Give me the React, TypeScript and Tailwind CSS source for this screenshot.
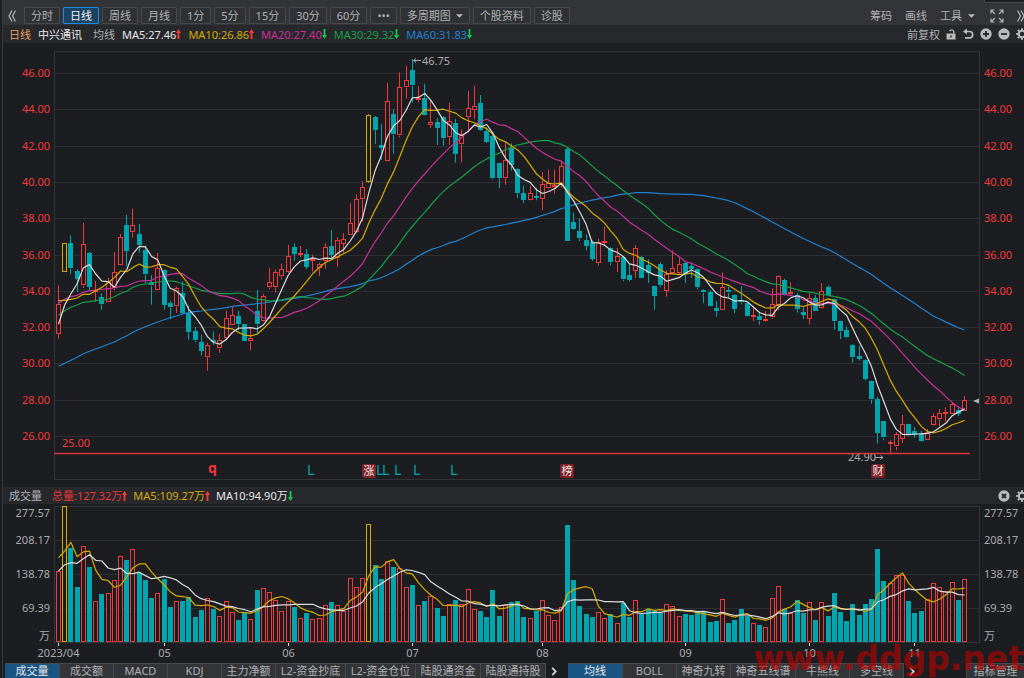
import React from "react";

type Kind = "up" | "down" | "limit";
interface Candle {
  x: number;
  high: number;
  top: number;
  bottom: number;
  low: number;
  kind: Kind;
}

const RED = "#f0393c";
const CYAN = "#00a5ad";
const YELLOW = "#d6ab00";
const WHITE = "#dcdcdc";
const MAGENTA = "#c9309b";
const GREEN = "#14a04a";
const BLUE = "#1e82d2";
const GRAY = "#a9abae";

const FIRST_X = 58.5;
const STEP = 6.206;
const VOLUME_BASE = 642;

/* Each segment lists candles as "kind high,top,bottom,low", in thirds of a unit below its origin. */
const candleSegments: { origin: number; rows: string }[] = [
  {
    origin: 180,
    rows: `R 316,372,463,476|Y 190,190,277,277|C 166,191,266,283|C 268,274,298,336|R 129,193,317,324|C 216,220,321,330|R 303,332,335,365|C 340,352,374,389|R 294,305,367,367|R 216,278,327,331|R 162,172,257,257|C 105,135,213,258|R 86,136,157,173|C 132,164,197,218|C 196,211,284,310|C 286,307,317,374|R 219,265,331,331|C 268,270,374,389|C 362,370,383,417|R 320,326,380,399|C 304,340,400,404|C 377,400,457,479|C 441,454,482,487|C 464,487,513,527|R 488,497,532,572|C 454,481,488,494|R 461,481,506,518|R 392,415,476,479|R 380,406,436,436|C 392,408,433,451|C 432,433,485,485|R 441,475,485,511|C 330,395,434,463|R 341,350,424,426|R 264,307,322,328|R 268,278,322,338`,
  },
  {
    origin: 50,
    rows: `R 641,658,680,688|R 585,619,667,670|C 580,591,611,632|R 588,609,611,622|C 597,612,650,657|R 614,629,632,664|R 638,643,656,678|R 580,592,634,657|C 540,588,616,627|R 562,570,624,650|R 550,567,581,608|R 460,520,556,556|R 433,448,547,549|R 394,412,448,515|Y 193,195,395,398|C 198,202,241,281|C 222,285,295,330|R 99,154,334,334|C 178,193,254,311|R 67,113,257,262|R 48,91,113,146|C 27,61,107,158|R 108,146,151,157|C 101,145,196,197|R 150,216,226,234|C 204,216,233,285|C 198,202,265,287|R 158,214,262,284|C 207,220,313,338|R 238,257,283,337|R 123,175,202,247|R 107,169,181,207|C 135,160,241,243|C 232,243,276,279|C 255,259,386,389|C 338,340,385,415`,
  },
  {
    origin: 120,
    rows: `R 66,121,176,194|C 70,84,136,152|C 145,147,220,234|C 197,219,240,250|R 198,219,239,241|C 203,228,231,241|R 156,193,238,271|R 149,190,206,208|R 149,195,200,221|R 122,139,195,203|C 83,87,364,364|C 277,306,326,329|C 295,335,356,363|C 343,360,377,391|C 361,367,417,422|R 356,367,430,437|R 320,363,369,378|C 382,386,428,436|R 384,409,428,456|C 408,413,479,484|C 432,465,480,484|R 376,384,452,473|C 408,411,473,473|C 418,436,459,489|C 497,499,528,570|C 427,434,497,502|R 451,462,512,530|R 391,445,460,462|R 412,433,460,463|C 424,430,463,489|C 429,439,447,474|C 446,448,502,508|C 508,511,518,550|C 511,517,558,558|C 543,565,574,590|R 457,502,571,571|C 500,511,518,534|C 523,525,566,580|C 498,541,548,553`,
  },
  {
    origin: 250,
    rows: `C 156,161,200,201|R 170,196,202,213|C 188,199,212,224|R 183,207,213,215|R 115,164,203,206|R 76,79,168,181|C 86,92,136,137|R 97,128,134,137|C 129,135,178,188|C 172,186,194,206|R 128,145,207,223|C 135,144,182,183|R 99,124,175,176|C 106,111,136,139|C 147,149,215,239|C 213,215,245,267|C 230,240,262,264|C 283,286,323,338|C 287,318,327,332|C 328,332,388,392|C 392,395,449,461|C 440,447,548,581|C 513,515,564,571|R 571,577,583,613|R 546,553,590,601|R 495,522,566,579|C 521,523,553,556|C 531,543,555,563|C 543,550,574,576|R 537,546,571,571|R 490,499,526,527|R 477,489,508,530|R 472,488,492,514|R 457,464,495,497|C 470,481,492,498|R 438,451,484,484`,
  },
];

const kinds: Record<string, Kind> = { R: "up", C: "down", Y: "limit" };

const candles: Candle[] = candleSegments
  .flatMap(({ origin, rows }) =>
    rows.split("|").map((row) => {
      const [k, values] = row.split(" ");
      const [high, top, bottom, low] = values.split(",").map((v) => origin + Number(v) / 3);
      return { high, top, bottom, low, kind: kinds[k] };
    }),
  )
  .map((c, i) => ({ ...c, x: FIRST_X + i * STEP }));

const volumeSegments: { origin: number; tops: number[] }[] = [
  {
    origin: 430,
    tops: [
      424, 229, 355, 472, 349, 411, 514, 493, 490, 451, 380, 390, 358, 429, 451, 504, 490, 448, 533, 514, 515, 502, 562,
      541, 505, 539, 559, 514, 547, 571, 550, 567, 480, 475, 487, 510, 545, 515, 533, 566, 550, 569, 564, 526, 517, 526,
    ],
  },
  {
    origin: 455,
    tops: [
      468, 370, 398, 370, 208, 332, 374, 319, 336, 340, 398, 390, 451, 440, 425, 459, 483, 449, 435, 449, 404, 462, 469,
      488, 405, 483, 451, 441, 438, 488, 489, 469, 436, 481, 496, 457, 211, 376, 454, 477, 488, 473, 489, 478, 505, 446,
      486, 436, 477, 462, 470, 474, 449, 454, 484,
    ],
  },
  {
    origin: 485,
    tops: [
      388, 390, 380, 380, 411, 409, 343, 414, 406, 374, 394, 415, 420, 426, 340, 303, 372, 385, 346, 385, 351, 406, 351,
      395, 326, 382, 409, 358, 390, 358, 343, 193, 289, 295, 270, 271, 350, 384, 380, 343, 295, 308, 320, 292, 345, 282,
    ],
  },
];
const volumeTops = volumeSegments.flatMap((s) => s.tops.map((t) => s.origin + t / 3));

const thirds = (origin: number, values: number[]) => values.map((v) => origin + v / 3);

/* Averages need sessions from before the visible range, so the first values are given. */
function average(series: number[], span: number, head: number[]): string {
  return series
    .map((_, i) => {
      const y = i < head.length ? head[i] : series.slice(i - span + 1, i + 1).reduce((a, b) => a + b, 0) / span;
      return `${(FIRST_X + i * STEP).toFixed(1)},${y.toFixed(1)}`;
    })
    .join(" ");
}

const closes = candles.map((c) => (c.kind === "down" ? c.bottom : c.top));

const priceLines = [
  {
    color: BLUE,
    points: average(
      closes,
      60,
      thirds(180, [
        559, 550, 541, 532, 521, 514, 507, 500, 493, 486, 476, 467, 457, 448, 440, 433, 426, 419, 413, 408, 402, 398,
        395, 393, 390, 388, 386, 383, 379, 377, 375, 373, 371, 369, 366, 363, 361, 358, 355, 352, 348, 344, 339, 334,
        329, 326, 323, 320, 316, 311, 303, 299, 293, 285, 276, 266, 253, 241, 228,
      ]),
    ),
  },
  {
    color: GREEN,
    points: average(
      closes,
      30,
      thirds(180, [
        406, 392, 382, 375, 367, 365, 362, 360, 358, 350, 340, 334, 322, 315, 312, 309, 306, 303, 303, 305, 311, 318,
        324, 331, 334, 338, 341, 341, 341,
      ]),
    ),
  },
  {
    color: MAGENTA,
    points: average(
      closes,
      20,
      thirds(180, [370, 357, 350, 346, 337, 332, 330, 328, 326, 324, 319, 318, 310, 303, 302, 301, 291, 288, 283]),
    ),
  },
  { color: YELLOW, points: average(closes, 10, thirds(180, [362, 361, 358, 354, 343, 343, 332, 322, 308])) },
  { color: WHITE, points: average(closes, 5, thirds(180, [433, 375, 341, 311])) },
];

const volumeLines = [
  { color: YELLOW, points: average(volumeTops, 5, thirds(430, [383, 363, 337, 380])) },
  { color: WHITE, points: average(volumeTops, 10, thirds(430, [423, 404, 398, 400, 386, 374, 391, 393, 414])) },
];

const priceLabels = Array.from({ length: 11 }, (_, i) => ({ text: `${46 - i * 2}.00`, y: Math.round(73 + i * 36.3) }));
const volumeLabels = [
  { text: "277.57", y: 517 },
  { text: "208.17", y: 544 },
  { text: "138.78", y: 578 },
  { text: "69.39", y: 612 },
  { text: "万", y: 640 },
];
const months = [
  { text: "2023/04", i: 0 },
  { text: "05", i: 17 },
  { text: "06", i: 37 },
  { text: "07", i: 57 },
  { text: "08", i: 78 },
  { text: "09", i: 101 },
  { text: "10", i: 121 },
  { text: "11", i: 138 },
];

const snap = (v: number) => Math.floor(v) + 0.5;

function CandleMark({ c }: { c: Candle }) {
  const x = snap(c.x);
  const color = c.kind === "down" ? CYAN : c.kind === "up" ? RED : YELLOW;
  const top = snap(c.top);
  const height = Math.max(1, Math.round(c.bottom - c.top) - 1);
  return (
    <g stroke={color} strokeWidth={1}>
      <path d={`M${x} ${c.high.toFixed(1)}V${c.top.toFixed(1)}M${x} ${c.bottom.toFixed(1)}V${c.low.toFixed(1)}`} />
      <rect x={x - 2} y={top} width={4} height={height} fill={c.kind === "down" ? CYAN : "#1c1d20"} />
    </g>
  );
}

function PriceChart() {
  return (
    <svg viewBox="3 43 1021 444" className="block w-full" role="img" aria-label="日线" fontSize={11}>
      {priceLabels.map((l) => (
        <g key={l.text}>
          <path d={`M54 ${l.y + 0.5}H980`} stroke="#2e2f33" />
          <text x={50} y={l.y + 4} textAnchor="end" fill={RED}>
            {l.text}
          </text>
          <text x={984} y={l.y + 4} fill={RED}>
            {l.text}
          </text>
        </g>
      ))}
      <rect x={54.5} y={51.5} width={925} height={428} fill="none" stroke="#333438" />
      {candles.map((c, i) => (
        <CandleMark key={i} c={c} />
      ))}
      {priceLines.map((l) => (
        <polyline key={l.color} points={l.points} fill="none" stroke={l.color} strokeWidth={1.2} strokeLinejoin="round" />
      ))}
      <text x={848} y={461} fill={GRAY}>
        24.90
      </text>
      <path d="M875 457.5H883M880.5 455.5L883 457.5L880.5 459.5" fill="none" stroke={GRAY} />
      <path d="M54 453.5H970" stroke="#d8363a" strokeWidth={1.4} />
      <text x={62} y={447} fill={RED}>
        25.00
      </text>
      <path d="M413.5 60.5H421M416 58.5L413.5 60.5L416 62.5" fill="none" stroke={GRAY} />
      <text x={422} y={65} fill={GRAY}>
        46.75
      </text>
      <path d="M979 398.5V403.5L973 401Z" fill="#b4b4b4" />
      <text x={208} y={473} fontSize={14} fontWeight={700} fill="#f0373a">
        q
      </text>
      {[307, 376, 382, 394, 413, 450].map((x) => (
        <text key={x} x={x} y={475} fontSize={14} fill={CYAN}>
          L
        </text>
      ))}
      {[
        { x: 362, text: "涨" },
        { x: 560, text: "榜" },
        { x: 871, text: "财" },
      ].map((b) => (
        <g key={b.text}>
          <rect x={b.x} y={464} width={14} height={14} rx={2} fill="#7d2328" />
          <text x={b.x + 7} y={475} textAnchor="middle" fill="#f0e4e4">
            {b.text}
          </text>
        </g>
      ))}
    </svg>
  );
}

function VolumeChart() {
  return (
    <svg viewBox="3 504 1021 159" className="block w-full" role="img" aria-label="成交量" fontSize={11} fill={GRAY}>
      {[540.5, 574.5, 608.5].map((y) => (
        <path key={y} d={`M54 ${y}H980`} stroke="#2e2f33" />
      ))}
      <rect x={54.5} y={506.5} width={925} height={136} fill="none" stroke="#333438" />
      {volumeLabels.map((l) => (
        <g key={l.text}>
          <text x={50} y={l.y} textAnchor="end">
            {l.text}
          </text>
          <text x={984} y={l.y}>
            {l.text}
          </text>
        </g>
      ))}
      {volumeTops.map((t, i) => {
        const { kind, x } = candles[i];
        const color = kind === "down" ? CYAN : kind === "up" ? RED : YELLOW;
        const top = snap(t);
        return (
          <rect
            key={i}
            x={snap(x) - 2}
            y={top}
            width={4}
            height={VOLUME_BASE - 0.5 - top}
            fill={kind === "down" ? CYAN : "#1c1d20"}
            stroke={color}
          />
        );
      })}
      {volumeLines.map((l) => (
        <polyline key={l.color} points={l.points} fill="none" stroke={l.color} strokeWidth={1.2} strokeLinejoin="round" />
      ))}
      {months.map((m) => {
        const x = snap(FIRST_X + m.i * STEP);
        return (
          <g key={m.text}>
            <path d={`M${x} 643V646`} stroke={WHITE} />
            <text x={x} y={657} textAnchor="middle">
              {m.text}
            </text>
          </g>
        );
      })}
    </svg>
  );
}

function Trend({ up }: { up: boolean }) {
  return (
    <svg
      viewBox="0 0 5 10"
      className={up ? "h-[10px] w-[5px] text-[#fa3c3c]" : "h-[10px] w-[5px] rotate-180 text-[#14c850]"}
      aria-hidden="true"
    >
      <path d="M2.5 0L5 4H3.4V10H1.6V4H0Z" fill="currentColor" />
    </svg>
  );
}

function Reading({ className, up, children }: { className: string; up: boolean; children: React.ReactNode }) {
  return (
    <span className={`flex items-center ${className}`}>
      {children}
      <Trend up={up} />
    </span>
  );
}

function Caret() {
  return (
    <svg viewBox="0 0 8 4" className="h-[4px] w-[7px]" aria-hidden="true">
      <path d="M0 0H8L4 4Z" fill="#b9babc" />
    </svg>
  );
}

function Gear() {
  return (
    <button aria-label="设置" className="w-[8px] overflow-hidden">
      <svg viewBox="0 0 12 12" className="h-[12px] w-[12px]">
        <circle cx="6" cy="6" r="3.2" fill="none" stroke="#b9babc" strokeWidth="2" />
        <path
          d="M6 0.2V2.5M6 9.5V11.8M0.2 6H2.5M9.5 6H11.8M1.9 1.9L3.4 3.4M8.6 8.6L10.1 10.1M1.9 10.1L3.4 8.6M8.6 3.4L10.1 1.9"
          stroke="#b9babc"
          strokeWidth="2"
        />
      </svg>
    </button>
  );
}

function RoundButton({ label, mark }: { label: string; mark: string }) {
  return (
    <button aria-label={label}>
      <svg viewBox="0 0 12 12" className="h-[12px] w-[12px]">
        <circle cx="6" cy="6" r="5.7" fill="#b9babc" />
        <path d={mark} stroke="#27282b" strokeWidth="1.8" />
      </svg>
    </button>
  );
}

function Chevrons({ left }: { left: boolean }) {
  return (
    <svg viewBox="0 0 8 12" className={left ? "h-[12px] w-[8px]" : "h-[12px] w-[8px] rotate-180"} aria-hidden="true">
      <path d="M4 0.5L1 6L4 11.5M7.5 0.5L4.5 6L7.5 11.5" fill="none" stroke="#b9babc" strokeWidth="1.2" />
    </svg>
  );
}

const periods = ["分时", "日线", "周线", "月线", "1分", "5分", "15分", "30分", "60分", "•••"];

const indicatorTabs = [
  { text: "成交量", width: "w-[55px]" },
  { text: "成交额", width: "w-[54px]" },
  { text: "MACD", width: "w-[54px]" },
  { text: "KDJ", width: "w-[54px]" },
  { text: "主力净额", width: "w-[54px]" },
  { text: "L2-资金抄底", width: "w-[70px]" },
  { text: "L2-资金仓位", width: "w-[70px]" },
  { text: "陆股通资金", width: "w-[65px]" },
  { text: "陆股通持股", width: "w-[65px]" },
];
const overlayTabs = [
  { text: "均线", width: "w-[55px]" },
  { text: "BOLL", width: "w-[54px]" },
  { text: "神奇九转", width: "w-[54px]" },
  { text: "神奇五线谱", width: "w-[65px]" },
  { text: "牛熊线", width: "w-[54px]" },
  { text: "多空线", width: "w-[54px]" },
];

function Tabs({ items }: { items: { text: string; width: string }[] }) {
  return (
    <div className="flex">
      {items.map((t, i) => (
        <button
          key={t.text}
          className={`${t.width} flex h-[16px] items-start justify-center whitespace-nowrap border-t border-r border-[#48494d] leading-[14px] ${
            i === 0 ? "bg-[#195582] text-[#e6e6e6]" : "bg-[#333438] text-[#b0b1b4]"
          }`}
        >
          {t.text}
        </button>
      ))}
    </div>
  );
}

function More() {
  return (
    <button aria-label="更多" className="flex w-[22px] items-center pl-[5px]">
      <svg viewBox="0 0 6 10" className="h-[9px] w-[6px]">
        <path d="M1 1L5 5L1 9" fill="none" stroke="#d2d2d2" strokeWidth="2" />
      </svg>
    </button>
  );
}

export default function App() {
  const plainButton = "flex h-[17px] items-center rounded-[1px] border px-[6px]";
  return (
    <div className="relative flex h-screen overflow-hidden bg-[#1c1d20] font-['Noto_Sans','Noto_Sans_CJK_SC',sans-serif] text-[11px] leading-[15px] text-[#b0b1b4]">
      <div className="w-[3px] shrink-0 border-r border-[#38393d] bg-[#1c1d20]" />
      <main className="min-w-0 flex-1">
        <div className="flex h-[25px] items-center justify-between bg-[#333438] pt-[6px]">
          <div className="flex items-center gap-[3px]">
            <button aria-label="收起" className="mr-[5px] ml-[5px]">
              <Chevrons left />
            </button>
            {periods.map((p) => (
              <button
                key={p}
                className={`${plainButton} ${
                  p === "日线" ? "border-[#1e8ce6] bg-[#1b4463] text-[#f0f0f0]" : "border-[#48494d] bg-[#303135]"
                }`}
              >
                {p}
              </button>
            ))}
            <button className={`${plainButton} gap-[5px] border-[#48494d] bg-[#303135]`}>
              多周期图
              <Caret />
            </button>
            <button className={`${plainButton} border-[#48494d] bg-[#303135]`}>个股资料</button>
            <button className={`${plainButton} border-[#48494d] bg-[#303135]`}>诊股</button>
          </div>
          <div className="flex items-center gap-[13px]">
            <button>筹码</button>
            <button>画线</button>
            <button className="flex items-center gap-[6px]">
              工具
              <Caret />
            </button>
            <button aria-label="全屏" className="ml-[2px]">
              <svg viewBox="0 0 14 14" className="h-[14px] w-[14px]">
                <path
                  d="M1 4.5V1H4.5M1 1L5 5M9.5 1H13V4.5M13 1L9 5M1 9.5V13H4.5M1 13L5 9M9.5 13H13V9.5M13 13L9 9"
                  fill="none"
                  stroke="#b0b1b4"
                  strokeWidth="1.2"
                />
              </svg>
            </button>
            <button aria-label="展开" className="w-[7px] overflow-hidden">
              <Chevrons left={false} />
            </button>
          </div>
        </div>

        <div className="flex h-[18px] items-center justify-between bg-[#27282b] pl-[6px]">
          <div className="flex items-center gap-[7px]">
            <span className="text-[#e1a064]">日线</span>
            <span className="text-[#e6e6e6]">中兴通讯</span>
            <span className="ml-[4px]">均线</span>
            <Reading className="text-[#e6e6e6]" up>MA5:27.46</Reading>
            <Reading className="text-[#d6ab00]" up>MA10:26.86</Reading>
            <Reading className="text-[#c9309b]" up={false}>MA20:27.40</Reading>
            <Reading className="text-[#14a04a]" up={false}>MA30:29.32</Reading>
            <Reading className="text-[#1e82d2]" up={false}>MA60:31.83</Reading>
          </div>
          <div className="flex items-center gap-[6px]">
            <button>前复权</button>
            <button aria-label="锁定" className="mr-[1px]">
              <svg viewBox="0 0 10 12" className="h-[12px] w-[10px]">
                <path d="M3.6 3.2A2.2 2.2 0 0 1 7.8 3.5V5.5" fill="none" stroke="#b9babc" strokeWidth="1.3" />
                <path d="M0.5 5.5H9.5V11.5H0.5ZM4.3 7.6V9.4H5.7V7.6Z" fill="#b9babc" fillRule="evenodd" />
              </svg>
            </button>
            <button aria-label="撤销">
              <svg viewBox="0 0 11 12" className="h-[12px] w-[11px]">
                <path d="M2 3.5H6.5A3.1 3.1 0 0 1 6.5 9.8H2" fill="none" stroke="#b9babc" strokeWidth="1.7" />
                <path d="M0 3.5L4 0.5V6.5Z" fill="#b9babc" />
              </svg>
            </button>
            <RoundButton label="放大" mark="M6 3V9M3 6H9" />
            <RoundButton label="缩小" mark="M3 6H9" />
            <Gear />
          </div>
        </div>

        <PriceChart />

        <div className="flex h-[17px] items-center justify-between bg-[#27282b] pl-[6px]">
          <div className="flex items-center gap-[6px]">
            <span className="mr-[4px]">成交量</span>
            <Reading className="text-[#e8393c]" up>总量:127.32万</Reading>
            <Reading className="text-[#d6ab00]" up>MA5:109.27万</Reading>
            <Reading className="text-[#e6e6e6]" up={false}>MA10:94.90万</Reading>
          </div>
          <div className="flex items-center gap-[6px]">
            <RoundButton label="关闭" mark="M4 4L8 8M8 4L4 8" />
            <Gear />
          </div>
        </div>

        <VolumeChart />

        <div className="flex justify-between pl-[2px]">
          <div className="flex">
            <Tabs items={indicatorTabs} />
            <More />
            <Tabs items={overlayTabs} />
            <More />
          </div>
          <button className="flex h-[16px] w-[58px] items-start justify-center border-t border-l border-[#48494d] bg-[#333438] leading-[14px] whitespace-nowrap">
            指标管理
          </button>
        </div>
      </main>
      <div className="absolute top-0 right-0 h-[3px] w-[40px] border-b border-l border-[#48494d] bg-[#1c1d20]" />
      <div className="pointer-events-none absolute right-0 bottom-0 font-['DejaVu_Sans'] text-[33px] leading-[38px] font-bold whitespace-nowrap text-[#be0000]/60">
        www.ddgp.net
      </div>
    </div>
  );
}
